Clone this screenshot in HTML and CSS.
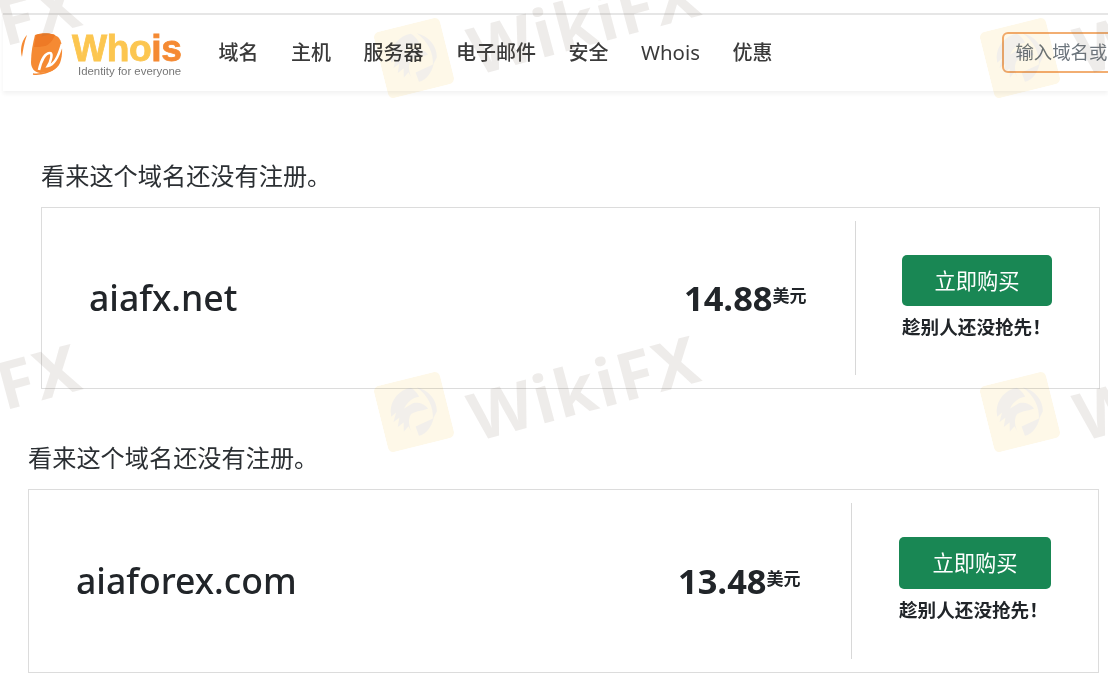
FILE: index.html
```html
<!DOCTYPE html>
<html lang="zh-CN">
<head>
<meta charset="utf-8">
<title>Whois</title>
<link rel="stylesheet" href="styles.css">
</head>
<body>
<header class="site-header">
  <a class="logo">
    <svg class="logo-mark" viewBox="5 6 45 46" width="45" height="46" aria-hidden="true">
      <path d="M11 11C6 17 5 26 7 32C8 25 9 18 12 10Z" fill="#f58a33"/>
      <path d="M20 10C28 7 39 8 44 13C48 18 48 30 45 38C42 45 34 48 25 48C19 47 16 43 16 37C16 27 18 18 20 10Z" fill="#f58a33"/>
      <path d="M21 10C28 8 36 8 40 10C38 15 35 19 30 21C26 22 22 22 19 22Z" fill="#ee7a26"/>
      <path d="M24 45C26 36 30 28 35 28C38 28 36 36 33 41C39 40 44 30 47 19" fill="none" stroke="#fff" stroke-width="2.6"/>
      <path d="M18 49C26 50 36 47 41 42" fill="none" stroke="#f58a33" stroke-width="1.4"/>
    </svg>
    <span class="logo-text">
      <span class="logo-name">Who<em>is</em></span>
      <span class="logo-tag">Identity for everyone</span>
    </span>
  </a>
  <nav class="nav">
    <a>域名</a><a>主机</a><a>服务器</a><a>电子邮件</a><a>安全</a><a class="latin">Whois</a><a>优惠</a>
  </nav>
  <input class="search" type="text" placeholder="输入域名或关键字">
</header>

<main>
  <section class="result result-a">
    <p class="notice">看来这个域名还没有注册。</p>
    <div class="card">
      <div class="domain">aiafx.net</div>
      <div class="price"><strong>14.88</strong><span>美元</span></div>
      <div class="buy">
        <a class="btn">立即购买</a>
        <p class="hurry">趁别人还没抢先！</p>
      </div>
    </div>
  </section>
  <section class="result result-b">
    <p class="notice">看来这个域名还没有注册。</p>
    <div class="card">
      <div class="domain">aiaforex.com</div>
      <div class="price"><strong>13.48</strong><span>美元</span></div>
      <div class="buy">
        <a class="btn">立即购买</a>
        <p class="hurry">趁别人还没抢先！</p>
      </div>
    </div>
  </section>
</main>

<div class="marks" aria-hidden="true">
  <span class="wm-text wm-fx1">FX</span>
  <span class="wm-text wm-w1">WikiFX</span>
  <span class="wm-text wm-w2">W</span>
  <span class="wm-text wm-fx2">FX</span>
  <span class="wm-text wm-w3">WikiFX</span>
  <span class="wm-text wm-w4">W</span>
  <svg class="wm-logo wm-l1" viewBox="0 0 70 70"><use href="#eagle"/></svg>
  <svg class="wm-logo wm-l2" viewBox="0 0 70 70"><use href="#eagle"/></svg>
  <svg class="wm-logo wm-l3" viewBox="0 0 70 70"><use href="#eagle"/></svg>
  <svg class="wm-logo wm-l4" viewBox="0 0 70 70"><use href="#eagle"/></svg>
  <svg class="defs" width="0" height="0">
    <defs>
      <g id="eagle">
        <rect width="70" height="70" rx="6" fill="#fdf3d8"/>
        <path d="M38 10C26 9 15 17 12 28L11 34L17 31L12 40L19 37L15 46L22 43L20 52L26 48L28 56C26 48 27 41 31 37C35 34 42 36 50 35C47 29 42 26 36 26L26 29C30 24 37 20 44 21C43 17 41 13 38 10Z" fill="#e9e5de"/>
        <path d="M44 11C55 17 61 28 58 40L52 47C56 35 53 22 44 11Z" fill="#e9e5de"/>
        <path d="M33 50L53 46C49 54 42 60 34 60Z" fill="#e9e5de"/>
      </g>
    </defs>
  </svg>
</div>
</body>
</html>
```

FILE: styles.css
```css
* { box-sizing: border-box; }

html, body {
  margin: 0;
  height: 682px;
  overflow: hidden;
  background: #fff;
}

body {
  position: relative;
  padding-top: 13px;
  font-family: "Noto Sans", "Noto Sans CJK SC", sans-serif;
  color: #212529;
}

.site-header {
  display: flex;
  align-items: center;
  height: 78px;
  margin-left: 3px;
  padding-left: 17px;
  border-top: 2px solid #e6e6e6;
  box-shadow: 0 3px 4px rgba(0, 0, 0, 0.05);
  overflow: hidden;
  background: #fff;
}

.logo {
  display: flex;
  align-items: center;
  flex-shrink: 0;
  width: 198.5px;
}

.logo-mark { flex-shrink: 0; margin-top: 2px; margin-right: 7px; }

.logo-text { display: flex; flex-direction: column; margin-top: 3px; }

.logo-name {
  font-family: "Liberation Sans", sans-serif;
  font-weight: 700;
  font-size: 37.2px;
  line-height: 33px;
  letter-spacing: -0.4px;
  color: #fcc650;
  -webkit-text-stroke: 0.8px currentColor;
}

.logo-name em { font-style: normal; color: #f58a33; }

.logo-tag {
  font-family: "Liberation Sans", sans-serif;
  font-size: 11.4px;
  line-height: 12px;
  color: #777;
  margin-left: 6px;
  white-space: nowrap;
}

.nav {
  display: flex;
  align-items: baseline;
  gap: 32.5px;
  margin-top: -3px;
  font-family: "Noto Sans CJK SC", sans-serif;
  font-size: 20px;
  font-weight: 500;
  color: #3a3a3a;
  flex-shrink: 0;
  white-space: nowrap;
}

.nav .latin { font-family: "Noto Sans", sans-serif; font-weight: 400; font-size: 20.4px; }

.search {
  flex-shrink: 0;
  width: 260px;
  height: 41px;
  margin-top: -1px;
  margin-left: 230px;
  padding: 0 11px 3px;
  border: 2px solid #f2ae72;
  border-radius: 6px;
  background: transparent;
  font-family: "Noto Sans CJK SC", sans-serif;
  font-size: 18.4px;
}

.search::placeholder { color: #6c757d; opacity: 1; }

.notice {
  margin: 0;
  font-family: "Noto Sans CJK SC", sans-serif;
  font-size: 24.2px;
  line-height: 34px;
  color: #2b2f33;
}

.result-a { margin: 67px 8px 0 41px; }
.result-b { margin: 51px 9px 0 28px; }

.result-a .notice { margin-bottom: 15px; }
.result-b .notice { margin-bottom: 15px; }

.card {
  display: flex;
  align-items: center;
  height: 182px;
  border: 1px solid #dcdcdc;
  background: #fff;
}

.result-b .card { height: 184px; }

.domain {
  flex: 1;
  margin-top: -2px;
  padding-left: 47px;
  font-size: 35.6px;
  font-weight: 500;
  color: #212529;
}

.price {
  display: flex;
  align-items: flex-start;
  width: 171px;
  flex-shrink: 0;
}

.result-b .price { width: 173px; }

.price strong {
  font-family: "Open Sans", sans-serif;
  font-size: 34.4px;
  font-weight: 700;
  line-height: 46px;
}

.price span {
  font-family: "Noto Sans CJK SC", sans-serif;
  font-size: 17px;
  font-weight: 700;
  line-height: 20px;
  margin-top: 10px;
}

.buy {
  flex-shrink: 0;
  align-self: stretch;
  width: 244px;
  margin: 13px 0;
  padding: 34px 47px 0 46px;
  border-left: 1px solid #d8d8d8;
}

.result-b .buy { width: 247px; padding-left: 47px; }

.btn {
  display: block;
  height: 51px;
  border-radius: 5px;
  background: #198754;
  color: #fff;
  font-family: "Noto Sans CJK SC", sans-serif;
  font-size: 21.3px;
  line-height: 50px;
  text-align: center;
}

.result-b .btn { height: 52px; }

.hurry {
  margin: 7px 0 0;
  font-family: "Noto Sans CJK SC", sans-serif;
  font-size: 18.6px;
  font-weight: 700;
  line-height: 26px;
  white-space: nowrap;
}

.marks {
  position: absolute;
  inset: 0;
  overflow: hidden;
  pointer-events: none;
}

.wm-text {
  position: absolute;
  font-family: "Noto Sans", sans-serif;
  font-size: 66px;
  font-weight: 700;
  line-height: 80px;
  letter-spacing: 2px;
  color: rgba(120, 105, 95, 0.13);
  transform: rotate(-15deg);
  transform-origin: left bottom;
  white-space: nowrap;
}

.wm-fx1 { left: 8px; top: -20px; }
.wm-w1 { left: 480px; top: 9px; }
.wm-w2 { left: 1086px; top: 9px; }
.wm-fx2 { left: 8px; top: 344px; }
.wm-w3 { left: 480px; top: 375px; }
.wm-w4 { left: 1086px; top: 375px; }

.wm-logo {
  position: absolute;
  width: 68px;
  height: 68px;
  transform: rotate(-14deg);
  opacity: 0.6;
  mix-blend-mode: multiply;
}

.wm-l1 { left: 380px; top: 24px; }
.wm-l2 { left: 986px; top: 24px; }
.wm-l3 { left: 380px; top: 378px; }
.wm-l4 { left: 986px; top: 378px; }

.defs { position: absolute; }
```
